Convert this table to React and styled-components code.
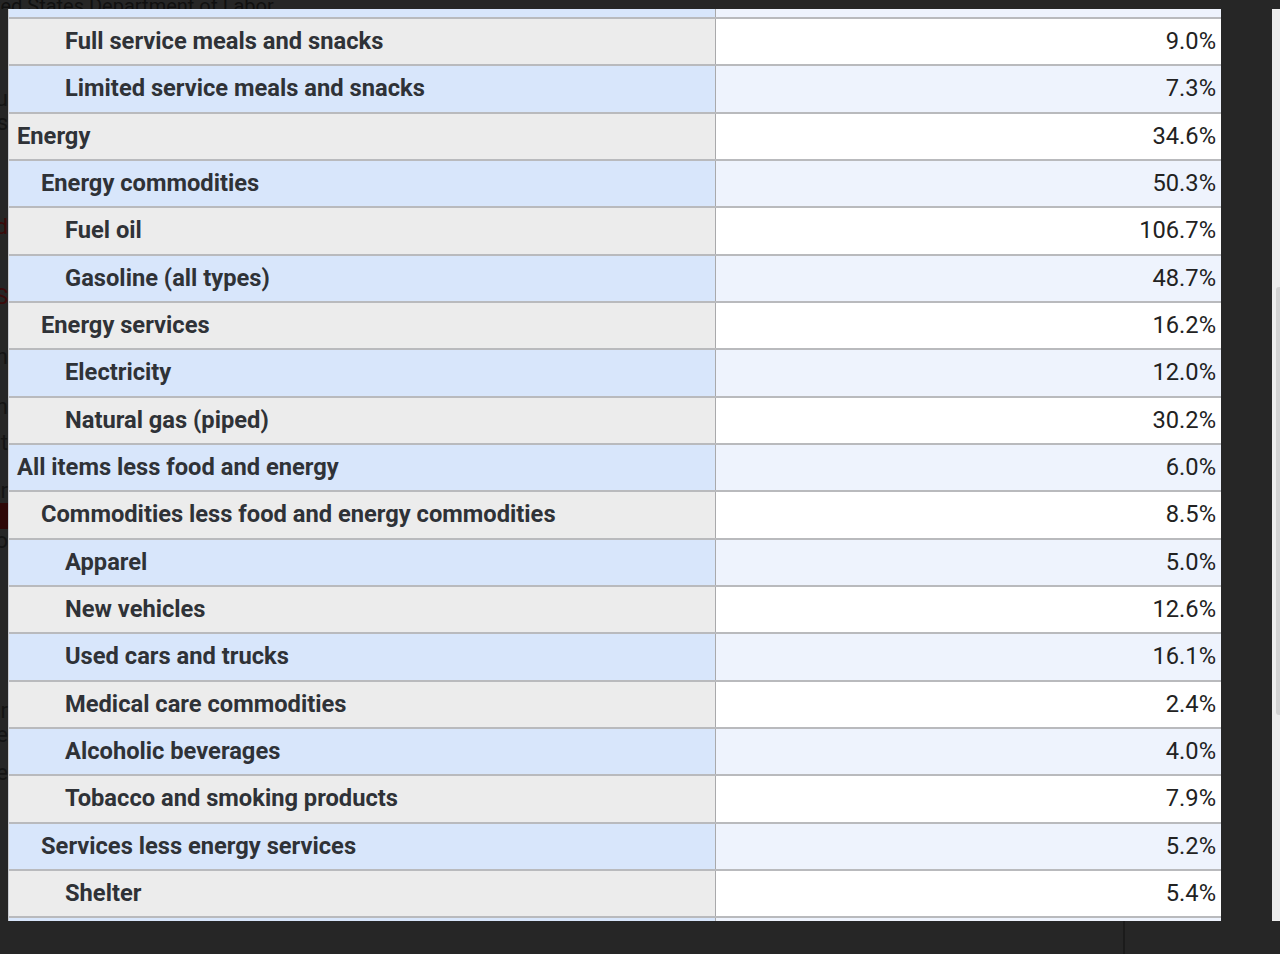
import React from "react";
import styled, { createGlobalStyle } from "styled-components";

const GlobalStyle = createGlobalStyle`
  body {
    margin: 0;
    background: #262626;
    font-family: Roboto, "Liberation Sans", sans-serif;
  }
`;

const rows = [
  { label: "Food away from home", level: 1, value: "7.7%" },
  { label: "Full service meals and snacks", level: 2, value: "9.0%" },
  { label: "Limited service meals and snacks", level: 2, value: "7.3%" },
  { label: "Energy", level: 0, value: "34.6%" },
  { label: "Energy commodities", level: 1, value: "50.3%" },
  { label: "Fuel oil", level: 2, value: "106.7%" },
  { label: "Gasoline (all types)", level: 2, value: "48.7%" },
  { label: "Energy services", level: 1, value: "16.2%" },
  { label: "Electricity", level: 2, value: "12.0%" },
  { label: "Natural gas (piped)", level: 2, value: "30.2%" },
  { label: "All items less food and energy", level: 0, value: "6.0%" },
  { label: "Commodities less food and energy commodities", level: 1, value: "8.5%" },
  { label: "Apparel", level: 2, value: "5.0%" },
  { label: "New vehicles", level: 2, value: "12.6%" },
  { label: "Used cars and trucks", level: 2, value: "16.1%" },
  { label: "Medical care commodities", level: 2, value: "2.4%" },
  { label: "Alcoholic beverages", level: 2, value: "4.0%" },
  { label: "Tobacco and smoking products", level: 2, value: "7.9%" },
  { label: "Services less energy services", level: 1, value: "5.2%" },
  { label: "Shelter", level: 2, value: "5.4%" },
  { label: "Rent of primary residence", level: 2, value: "4.2%" },
];

const Screen = styled.div`
  width: 1280px;
  height: 954px;
  overflow: hidden;
  display: flex;
  flex-direction: column;
  background: #262626;
`;

const TopStrip = styled.div`
  height: 9px;
  overflow: hidden;
  color: #101010;
  font-size: 20px;
  line-height: 20px;
  white-space: nowrap;
`;

const PageTitle = styled.div`
  margin: -4px 0 0 -35px;
`;

const Middle = styled.div`
  height: 912px;
  display: flex;
`;

const Gutter = styled.div`
  width: 8px;
  overflow: hidden;
  display: flex;
  flex-direction: column;
  font-size: 22px;
  line-height: 24px;
  white-space: nowrap;
`;

const GutterLine = styled.div`
  height: ${(p) => p.h}px;
  display: flex;
  justify-content: flex-end;
  color: ${(p) => (p.red ? "#3b0a0a" : "#141414")};
  background: ${(p) => (p.block ? "#2e0808" : "transparent")};
`;

const Viewport = styled.div`
  width: 1213px;
  height: 912px;
  box-sizing: border-box;
  overflow: hidden;
  background: #fff;
  border-left: 1px solid #c9cbd0;
`;

const Table = styled.div`
  margin-top: -37.33px;
`;

const Row = styled.div`
  display: grid;
  grid-template-columns: 707px 1fr;
  height: 47.33px;
  box-sizing: border-box;
  border-bottom: 2px solid #b9babd;
`;

const Label = styled.div`
  display: flex;
  align-items: center;
  padding: 0 0 1px ${(p) => 8 + p.level * 24}px;
  background: ${(p) => (p.alt ? "#d8e6fb" : "#ececec")};
  border-right: 1px solid #a9a9ab;
  color: #2f3237;
  font-size: 23.7px;
  font-weight: 700;
  white-space: nowrap;
`;

const Value = styled.div`
  display: flex;
  align-items: center;
  justify-content: flex-end;
  padding: 0 5px 1px 0;
  background: ${(p) => (p.alt ? "#eef3fd" : "#ffffff")};
  color: #222;
  font-size: 23.7px;
`;

const Spacer = styled.div`
  flex: 1;
`;

const ScrollTrack = styled.div`
  width: 8px;
  background: #ececec;
  display: flex;
  flex-direction: column;
  padding-top: 278px;
  box-sizing: border-box;
`;

const ScrollThumb = styled.div`
  height: 428px;
  margin-left: 4px;
  background: #d2d2d2;
  border-radius: 3px 0 0 3px;
`;

const Bottom = styled.div`
  flex: 1;
  display: flex;
  padding-left: 1123px;
`;

const Divider = styled.div`
  width: 2px;
  background: #1b1b1b;
`;

const gutterLines = [
  { h: 78, t: "" },
  { h: 24, t: "u" },
  { h: 24, t: "s" },
  { h: 80, t: "" },
  { h: 70, t: "d", red: true },
  { h: 60, t: "S", red: true },
  { h: 50, t: "n" },
  { h: 36, t: "n" },
  { h: 48, t: "t" },
  { h: 24, t: "r" },
  { h: 26, t: "", block: true },
  { h: 40, t: "o" },
  { h: 130, t: "" },
  { h: 24, t: "r" },
  { h: 38, t: "e" },
  { h: 50, t: "e" },
];

const App = () => {
  return (
    <Screen>
      <GlobalStyle />
      <TopStrip>
        <PageTitle>United States Department of Labor</PageTitle>
      </TopStrip>
      <Middle>
        <Gutter>
          {gutterLines.map((g, i) => (
            <GutterLine key={i} h={g.h} red={g.red} block={g.block}>
              {g.t}
            </GutterLine>
          ))}
        </Gutter>
        <Viewport>
          <Table>
            {rows.map((r, i) => (
              <Row key={r.label}>
                <Label level={r.level} alt={i % 2 === 0}>
                  {r.label}
                </Label>
                <Value alt={i % 2 === 0}>{r.value}</Value>
              </Row>
            ))}
          </Table>
        </Viewport>
        <Spacer />
        <ScrollTrack>
          <ScrollThumb />
        </ScrollTrack>
      </Middle>
      <Bottom>
        <Divider />
      </Bottom>
    </Screen>
  );
};

export default App;
